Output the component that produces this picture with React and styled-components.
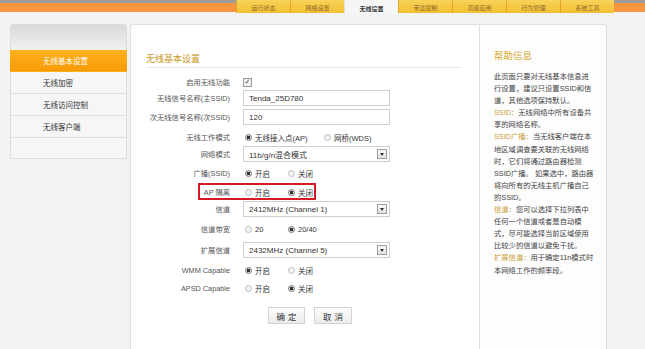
import React from "react";
import styled, { createGlobalStyle } from "styled-components";

const Global = createGlobalStyle`
  html, body { margin: 0; padding: 0; }
  body {
    width: 645px; height: 349px; overflow: hidden;
    background: #f3f2f5;
    font-family: "Liberation Sans", "Noto Sans CJK SC", sans-serif;
  }
`;

const CJK = `"Liberation Sans", "Noto Sans CJK SC", sans-serif`;

const Page = styled.div`
  display: flex; flex-direction: column; width: 645px; height: 349px;
`;

const Header = styled.div`
  position: relative; height: 14px; flex: none;
  background: linear-gradient(#9d9b98 0, #9d9b98 3px, #f7943f 3px, #f7943f 12px, #f3f2f5 12px);
  display: flex; padding-left: 236px;
`;

const Tab = styled.div`
  width: 54px; height: ${p => (p.$active ? 14 : 13)}px;
  box-sizing: border-box;
  border-left: 1px solid ${p => (p.$active ? "#e2e2e2" : "#e0a72c")};
  background: ${p => (p.$active ? "#f6f6f6" : "linear-gradient(#f8d25a, #f3bf33)")};
  color: ${p => (p.$active ? "#333" : "#8a6a2a")};
  font: ${p => (p.$active ? 700 : 400)} 6px ${CJK};
  display: flex; align-items: center; justify-content: center;
  padding-top: 2px;
`;

const Content = styled.div`
  display: flex; align-items: flex-start; padding: 10px 0 0 10px;
`;

const Sidebar = styled.div`
  width: 117px; height: 135px; box-sizing: border-box;
  border: 1px solid #dcdcdc; border-radius: 3px 3px 0 0;
  background: linear-gradient(#d9d9d9, #f1f1f1 25px, #f6f6f6 25px);
  padding-top: 25px; margin-right: 3px;
  display: flex; flex-direction: column;
`;

const SideItem = styled.div`
  height: 22px; flex: none; box-sizing: border-box;
  padding-left: 32px; display: flex; align-items: center;
  font: 7.5px ${CJK};
  color: ${p => (p.$active ? "#fff" : "#333")};
  background: ${p => (p.$active ? "linear-gradient(#fbb21c, #f89a06)" : "transparent")};
  border-bottom: 1px solid ${p => (p.$active ? "transparent" : "#dedede")};
  ${p => p.$active && "margin: 0 -1px; padding-left: 33px;"}
`;

const Main = styled.div`
  width: 349px; height: 340px; box-sizing: border-box;
  background: #fff; border: 1px solid #e0e0e0; border-right: none;
  border-radius: 3px 0 0 0;
  padding-top: 27px; display: flex; flex-direction: column;
`;

const Title = styled.div`
  margin: 0 18px 0 15px; height: 12px; line-height: 12px;
  padding-bottom: 3px; border-bottom: 1px solid #ececec;
  font: 9px ${CJK}; color: #c99a1e;
`;

const Row = styled.div`
  position: relative;
  display: grid; grid-template-columns: 99px 1fr; column-gap: 13px;
  height: 16px; align-items: center; margin-top: ${p => p.$top}px;
`;

const Label = styled.div`
  text-align: right; font: 7.3px ${CJK}; color: #555; white-space: nowrap;
`;

const Controls = styled.div`
  display: flex; align-items: center; height: 16px;
`;

const Check = styled.span`
  width: 7px; height: 7px; border: 1px solid #9a9a9a; background: #f2f2f2;
  display: inline-flex; align-items: center; justify-content: center;
  font: 700 7px "DejaVu Sans", sans-serif; color: #444; line-height: 1;
`;

const TextInput = styled.div`
  width: 147px; height: 16px; box-sizing: border-box;
  border: 1px solid #cfcfcf; background: #fff;
  padding-left: 5px; display: flex; align-items: center;
  font: 8px ${CJK}; color: #333; position: relative;
`;

const Arrow = styled.span`
  position: absolute; right: 2px; top: 2px;
  width: 10px; height: 10px; box-sizing: border-box;
  border: 1px solid #9c9c9c; background: linear-gradient(#fafafa, #e2e2e2);
  display: flex; align-items: center; justify-content: center;
  &::after {
    content: ""; border-left: 2.5px solid transparent; border-right: 2.5px solid transparent;
    border-top: 3px solid #333;
  }
`;

const Option = styled.label`
  display: inline-flex; align-items: center; gap: 3px;
  width: ${p => p.$w}px; font: 7.5px ${CJK}; color: #333; white-space: nowrap;
`;

const Dot = styled.span`
  width: 7px; height: 7px; border-radius: 50%; box-sizing: border-box; flex: none;
  border: 1px solid ${p => (p.$on ? "#7a7a7a" : "#bdbdbd")};
  background: ${p => (p.$on ? "radial-gradient(circle, #333 0 1.6px, #d8d8d8 2px)" : "#f3f3f3")};
  margin-left: 2px;
`;

const Mark = styled.div`
  position: absolute; left: 67px; top: -1px; width: 118px; height: 17px;
  box-sizing: border-box; border: 2px solid #d51a24;
`;

const Buttons = styled.div`
  display: flex; gap: 9px; padding-left: 137px; margin-top: 11px;
`;

const Btn = styled.div`
  width: ${p => p.$w}px; height: 17px; box-sizing: border-box;
  border: 1px solid #d2d2d2; background: linear-gradient(#fdfdfd, #ececec);
  display: flex; align-items: center; justify-content: center;
  font: 8.5px ${CJK}; color: #333; letter-spacing: 3px; padding-left: 3px;
`;

const Help = styled.div`
  width: 128px; height: 340px; box-sizing: border-box;
  background: #fdfdfe; border: 1px solid #e0e0e0; border-radius: 0 3px 0 0;
  padding: 25px 0 0 14px;
`;

const HelpTitle = styled.div`
  font: 9.5px ${CJK}; color: #d3a82a; height: 12px; line-height: 12px;
  margin-bottom: 9px;
`;

const HelpText = styled.div`
  font: 7.3px ${CJK}; color: #444; line-height: 12.1px; white-space: nowrap;
`;

const Key = styled.span`
  color: #c9a13a;
`;

const tabs = ["运行状态", "网络设置", "无线设置", "带宽控制", "高级应用", "行为管理", "系统工具"];
const sideItems = ["无线基本设置", "无线加密", "无线访问控制", "无线客户端"];

function Radios({ opts, on, w = 43 }) {
  return (
    <Controls>
      {opts.map((o, i) => (
        <Option key={o} $w={i === 0 ? w : 50}>
          <Dot $on={i === on} />
          {o}
        </Option>
      ))}
    </Controls>
  );
}

function Select({ value }) {
  return (
    <Controls>
      <TextInput>
        {value}
        <Arrow />
      </TextInput>
    </Controls>
  );
}

const helpLines = [
  ["此页面只要对无线基本信息进"],
  ["行设置，建议只设置SSID和信"],
  ["道，其他选项保持默认。"],
  [<Key key="k">SSID：</Key>, "无线网络中所有设备共"],
  ["享的网络名称。"],
  [<Key key="k">SSID广播：</Key>, "当无线客户端在本"],
  ["地区域调查要关联的无线网络"],
  ["时，它们将通过路由器检测"],
  ["SSID广播。 如果选中，路由器"],
  ["将向所有的无线主机广播自己"],
  ["的SSID。"],
  [<Key key="k">信道：</Key>, "您可以选择下拉列表中"],
  ["任何一个信道或者是自动模"],
  ["式，尽可能选择当前区域使用"],
  ["比较少的信道以避免干扰。"],
  [<Key key="k">扩展信道：</Key>, "用于确定11n模式时"],
  ["本网络工作的频率段。"],
];

export default function App() {
  return (
    <Page>
      <Global />
      <Header>
        {tabs.map((t, i) => (
          <Tab key={t} $active={i === 2}>{t}</Tab>
        ))}
      </Header>
      <Content>
        <Sidebar>
          {sideItems.map((s, i) => (
            <SideItem key={s} $active={i === 0}>{s}</SideItem>
          ))}
        </Sidebar>
        <Main>
          <Title>无线基本设置</Title>
          <Row $top={6}>
            <Label>启用无线功能</Label>
            <Controls><Check>✓</Check></Controls>
          </Row>
          <Row $top={0}>
            <Label>无线信号名称(主SSID)</Label>
            <Controls><TextInput>Tenda_25D780</TextInput></Controls>
          </Row>
          <Row $top={3}>
            <Label>次无线信号名称(次SSID)</Label>
            <Controls><TextInput>120</TextInput></Controls>
          </Row>
          <Row $top={4}>
            <Label>无线工作模式</Label>
            <Radios opts={["无线接入点(AP)", "网桥(WDS)"]} on={0} w={79} />
          </Row>
          <Row $top={1}>
            <Label>网络模式</Label>
            <Select value="11b/g/n混合模式" />
          </Row>
          <Row $top={3}>
            <Label>广播(SSID)</Label>
            <Radios opts={["开启", "关闭"]} on={0} />
          </Row>
          <Row $top={3}>
            <Label>AP 隔离</Label>
            <Radios opts={["开启", "关闭"]} on={1} />
            <Mark />
          </Row>
          <Row $top={1}>
            <Label>信道</Label>
            <Select value="2412MHz (Channel 1)" />
          </Row>
          <Row $top={4}>
            <Label>信道带宽</Label>
            <Radios opts={["20", "20/40"]} on={1} />
          </Row>
          <Row $top={5}>
            <Label>扩展信道</Label>
            <Select value="2432MHz (Channel 5)" />
          </Row>
          <Row $top={4}>
            <Label>WMM Capable</Label>
            <Radios opts={["开启", "关闭"]} on={0} />
          </Row>
          <Row $top={2}>
            <Label>APSD Capable</Label>
            <Radios opts={["开启", "关闭"]} on={1} />
          </Row>
          <Buttons>
            <Btn $w={37}>确定</Btn>
            <Btn $w={38}>取消</Btn>
          </Buttons>
        </Main>
        <Help>
          <HelpTitle>帮助信息</HelpTitle>
          <HelpText>
            {helpLines.map((l, i) => (
              <div key={i}>{l}</div>
            ))}
          </HelpText>
        </Help>
      </Content>
    </Page>
  );
}
